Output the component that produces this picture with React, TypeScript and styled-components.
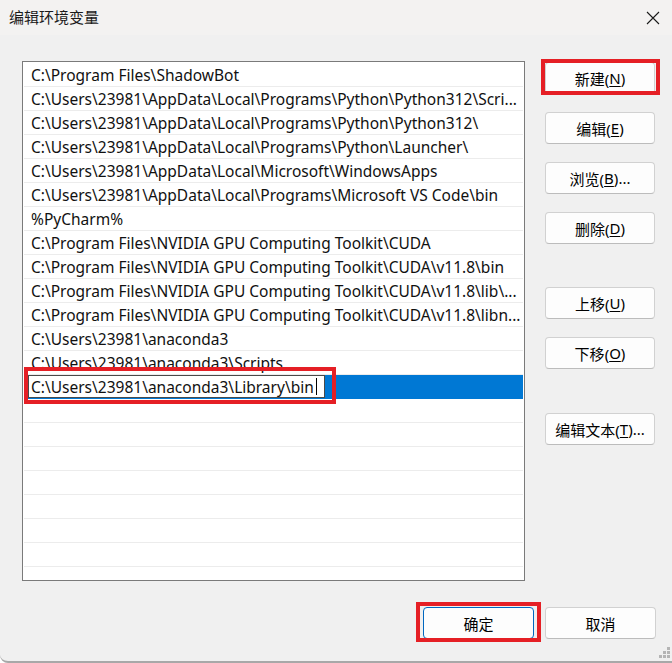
import React from "react";
import styled, { createGlobalStyle } from "styled-components";

const GlobalStyle = createGlobalStyle`
  html, body {
    margin: 0;
    padding: 0;
    background: #ffffff;
  }
  * {
    box-sizing: border-box;
  }
`;

const UI_FONT = `"Noto Sans", "Noto Sans CJK SC", sans-serif`;

const paths = [
  "C:\\Program Files\\ShadowBot",
  "C:\\Users\\23981\\AppData\\Local\\Programs\\Python\\Python312\\Scri...",
  "C:\\Users\\23981\\AppData\\Local\\Programs\\Python\\Python312\\",
  "C:\\Users\\23981\\AppData\\Local\\Programs\\Python\\Launcher\\",
  "C:\\Users\\23981\\AppData\\Local\\Microsoft\\WindowsApps",
  "C:\\Users\\23981\\AppData\\Local\\Programs\\Microsoft VS Code\\bin",
  "%PyCharm%",
  "C:\\Program Files\\NVIDIA GPU Computing Toolkit\\CUDA",
  "C:\\Program Files\\NVIDIA GPU Computing Toolkit\\CUDA\\v11.8\\bin",
  "C:\\Program Files\\NVIDIA GPU Computing Toolkit\\CUDA\\v11.8\\lib\\...",
  "C:\\Program Files\\NVIDIA GPU Computing Toolkit\\CUDA\\v11.8\\libn...",
  "C:\\Users\\23981\\anaconda3",
  "C:\\Users\\23981\\anaconda3\\Scripts",
];

const editing = "C:\\Users\\23981\\anaconda3\\Library\\bin";
const emptyRows = 8;

const sideButtons = [
  { label: "新建", key: "N", tail: "", top: 1, marked: true },
  { label: "编辑", key: "E", tail: "", top: 18 },
  { label: "浏览", key: "B", tail: "...", top: 18 },
  { label: "删除", key: "D", tail: "", top: 18 },
  { label: "上移", key: "U", tail: "", top: 43 },
  { label: "下移", key: "O", tail: "", top: 18 },
  { label: "编辑文本", key: "T", tail: "...", top: 44 },
];

const Window = styled.div`
  position: relative;
  width: 672px;
  height: 663px;
  background: #f0f0f0;
  border-bottom: 2px solid #a8a8a8;
  border-bottom-left-radius: 8px;
  display: flex;
  flex-direction: column;
  font-family: ${UI_FONT};
  color: #000;
  overflow: hidden;
`;

const TitleBar = styled.div`
  height: 35px;
  flex: none;
  background: #f3f2f1;
  display: flex;
  align-items: center;
  justify-content: space-between;
  padding: 0 12px 2px 9px;
`;

const Title = styled.span`
  font-size: 15px;
  color: #1a1a1a;
`;

const CloseIcon = styled.svg`
  width: 14px;
  height: 14px;
  margin-top: 2px;
`;

const Body = styled.div`
  flex: 1;
  display: flex;
  flex-direction: column;
  padding: 26px 16px 0 22px;
`;

const MainRow = styled.div`
  display: flex;
  gap: 20px;
`;

const ListBox = styled.div`
  width: 503px;
  height: 520px;
  background: #ffffff;
  border: 1px solid #7a7a7a;
  padding: 1px;
  overflow: hidden;
  flex: none;
`;

const Row = styled.div<{ $selected?: boolean }>`
  position: ${(p) => (p.$selected ? "relative" : "static")};
  z-index: ${(p) => (p.$selected ? 2 : "auto")};
  height: 24px;
  display: flex;
  align-items: center;
  padding-left: 7px;
  border-bottom: 1px solid ${(p) => (p.$selected ? "#0078d4" : "#ececec")};
  background: ${(p) => (p.$selected ? "#0078d4" : "transparent")};
  font-size: 15.5px;
  white-space: nowrap;
  overflow: ${(p) => (p.$selected ? "visible" : "hidden")};
  color: #111;
`;

const EditBox = styled.div`
  position: relative;
  margin-left: -3px;
  width: 297px;
  height: 23px;
  background: #ffffff;
  border: 1px solid #4a4a4a;
  display: flex;
  align-items: center;
  padding-left: 2px;
  font-size: 15.5px;
`;

const Caret = styled.span`
  display: inline-block;
  width: 1px;
  height: 17px;
  margin-left: 2px;
  background: #000;
`;

const Marker = styled.span<{ $inset: string }>`
  position: absolute;
  inset: ${(p) => p.$inset};
  border: 4px solid #e51f25;
  pointer-events: none;
`;

const SideColumn = styled.div`
  display: flex;
  flex-direction: column;
`;

const Button = styled.button<{ $top?: number; $default?: boolean; $width?: number }>`
  position: relative;
  width: ${(p) => p.$width ?? 110}px;
  height: 32px;
  margin-top: ${(p) => p.$top ?? 0}px;
  background: #fdfdfd;
  border: 1px solid ${(p) => (p.$default ? "#0067c0" : "#d1d1d1")};
  border-bottom-color: ${(p) => (p.$default ? "#0067c0" : "#bcbcbc")};
  border-radius: 4px;
  font-family: ${UI_FONT};
  font-size: 15px;
  color: #000;
  padding: 0;
  display: flex;
  align-items: center;
  justify-content: center;
  u {
    text-decoration-thickness: 1px;
    text-underline-offset: 2px;
  }
`;

const Footer = styled.div`
  display: flex;
  justify-content: flex-end;
  gap: 11px;
  margin-top: 26px;
`;

const Grip = styled.svg`
  position: absolute;
  right: 2px;
  bottom: 3px;
  width: 11px;
  height: 11px;
`;

function SideButton(props: {
  label: string;
  keyChar: string;
  tail: string;
  top: number;
  marked?: boolean;
}) {
  return (
    <Button $top={props.top}>
      {props.label}(<u>{props.keyChar}</u>){props.tail}
      {props.marked && <Marker $inset="-4px -6px -2px -5px" />}
    </Button>
  );
}

export default function App() {
  return (
    <>
      <GlobalStyle />
      <Window>
        <TitleBar>
          <Title>编辑环境变量</Title>
          <CloseIcon viewBox="0 0 14 14">
            <path d="M1 1 L13 13 M13 1 L1 13" stroke="#1a1a1a" strokeWidth="1.1" />
          </CloseIcon>
        </TitleBar>
        <Body>
          <MainRow>
            <ListBox>
              {paths.map((p) => (
                <Row key={p}>{p}</Row>
              ))}
              <Row $selected>
                <EditBox>
                  {editing}
                  <Caret />
                  <Marker $inset="-9px -12px -7px -5px" />
                </EditBox>
              </Row>
              {Array.from({ length: emptyRows }).map((_, i) => (
                <Row key={"e" + i} />
              ))}
            </ListBox>
            <SideColumn>
              {sideButtons.map((b) => (
                <SideButton
                  key={b.key}
                  label={b.label}
                  keyChar={b.key}
                  tail={b.tail}
                  top={b.top}
                  marked={b.marked}
                />
              ))}
            </SideColumn>
          </MainRow>
          <Footer>
            <Button $default $width={111}>
              确定
              <Marker $inset="-6px -8px -4px -8px" />
            </Button>
            <Button $width={111}>取消</Button>
          </Footer>
        </Body>
        <Grip viewBox="0 0 11 11">
          {[
            [8, 0],
            [8, 4],
            [4, 4],
            [8, 8],
            [4, 8],
            [0, 8],
          ].map(([x, y]) => (
            <rect key={`${x}-${y}`} x={x} y={y} width="3" height="3" fill="#b5b5b5" />
          ))}
        </Grip>
      </Window>
    </>
  );
}
